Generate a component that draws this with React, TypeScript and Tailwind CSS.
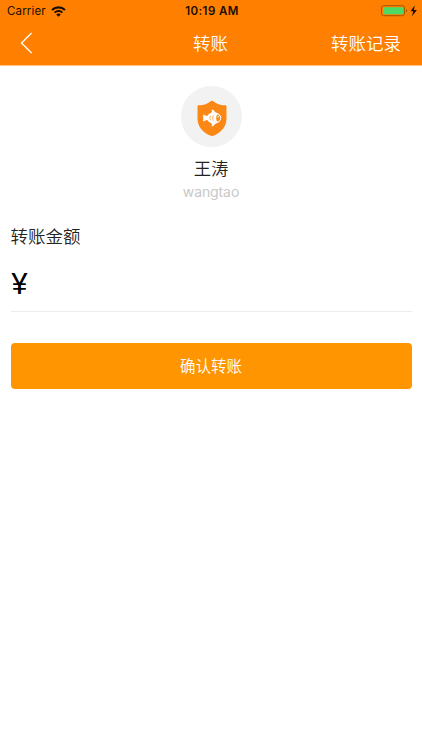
import React, { useState } from 'react'

const StatusBar: React.FC = () => (
  <div className="h-[21px] pt-px flex items-center justify-between pl-[7px] pr-[5px] font-normal text-[#1a0d00] font-['Inter',sans-serif]">
    <div className="flex-1 flex items-center gap-[5px]">
      <span className="text-[11.5px] leading-[21px] tracking-[0.15px]">Carrier</span>
      <svg width="15" height="11" viewBox="0 0 15 11" fill="none" stroke="#1a0d00">
        <path d="M1 4a9.2 9.2 0 0 1 13 0" strokeWidth="2.2" />
        <path d="M3.6 6.6a5.5 5.5 0 0 1 7.8 0" strokeWidth="1.9" />
        <path d="M7.5 10.8 5.2 8.5a3.1 3.1 0 0 1 4.6 0Z" fill="#1a0d00" stroke="none" />
      </svg>
    </div>
    <span className="text-[11.5px] leading-[21px] font-semibold tracking-[0.4px]">10:19 AM</span>
    <div className="flex-1 flex items-center justify-end">
      <svg width="36" height="12" viewBox="0 0 36 12">
        <rect x="0.5" y="0.7" width="23" height="10" rx="2" fill="none" stroke="#a85400" />
        <rect x="2" y="2.2" width="20" height="7" rx="0.8" fill="#4cd964" />
        <path d="M25 4.2c1.6.5 1.6 2.5 0 3Z" fill="#a85400" />
        <path d="M33.6.6 29.6 6.3h2.6L31 11.2l4.9-6.2H33Z" fill="#1a0d00" />
      </svg>
    </div>
  </div>
)

// Orange shield with the fish mark
const ShieldFish: React.FC = () => (
  <svg width="30" height="36" viewBox="0 0 30 36">
    <path
      d="M15 .7c1.2 0 2.6 1.5 4.4 2.5C21.8 4.6 24.6 5.2 28 5.2c1 0 1.5.5 1.5 1.5v11.6C29.5 26.4 24.8 32 17.5 35.3c-1.9.8-3.1.8-5 0C5.2 32 .5 26.4.5 18.3V6.7c0-1 .5-1.5 1.5-1.5 3.4 0 6.2-.6 8.6-2C12.4 2.2 13.8.7 15 .7Z"
      fill="#fb8715"
    />
    {/* Body, tail and fins */}
    <ellipse cx="17" cy="18" rx="7.2" ry="5.7" fill="#fff" />
    <path d="M6.200 14.500 11.500 16.800v2.400L6.200 21.500Z" fill="#fff" />
    <path d="M14.600 9.800h1.700l3 3.700h-5.500l1.200-1.700ZM14.600 26.200h1.700l3-3.700h-5.500l1.200 1.700Z" fill="#fff" />
    {/* Head, eye and stripes */}
    <path d="M20.200 14.300c2.100.7 3 2 3 3.700s-.9 3-3 3.700c-1.300-2.100-1.300-5.300 0-7.400Z" fill="#fb8715" />
    <circle cx="21.300" cy="16.800" r="0.8" fill="#fff" />
    <g fill="none" stroke="#fb8715" strokeWidth="0.7">
      <path d="M13.500 15.800c-.7 1.500-.7 3 0 4.400" />
      <path d="M16.300 15.200c-.9 1.900-.9 3.800 0 5.600" />
    </g>
  </svg>
)

const TransferPage: React.FC = () => {
  const [amount, setAmount] = useState('')

  return (
    <div className="min-h-screen bg-white font-['Noto_Sans_CJK_SC',sans-serif] font-[350]">
      {/* Header */}
      <header className="h-[66px] bg-[#ff8000] border-b border-[#ffbf80]">
        <StatusBar />
        <nav className="h-[44px] flex items-center justify-between pl-5 pr-[21px] text-white text-[17.5px] leading-[26px]">
          <button type="button" aria-label="返回" className="w-[70px]">
            <svg width="13" height="22" viewBox="0 0 13 22" fill="none" stroke="#fff" strokeWidth="1.3">
              <path d="M11.6 1 1.5 11l10.1 10" />
            </svg>
          </button>
          <h1 className="font-[350]">转账</h1>
          <button type="button" className="w-[70px] whitespace-nowrap">转账记录</button>
        </nav>
      </header>

      {/* Recipient */}
      <section className="pt-5 flex flex-col items-center">
        <div className="size-[61px] rounded-full bg-[#f2f2f2] flex items-center justify-center pt-[3px] pl-px">
          <ShieldFish />
        </div>
        <p className="mt-2 text-[17.3px] leading-[26px] text-[#222]">王涛</p>
        <p className="mt-px text-[14px] leading-[20px] tracking-[-0.1px] font-normal text-[#c8c8c8] font-['Inter',sans-serif]">wangtao</p>
      </section>

      {/* Amount */}
      <section className="px-[10.5px] pt-[21px]">
        <label htmlFor="amount" className="block text-[17.5px] leading-[26px] text-[#222]">
          转账金额
        </label>
        <div className="mt-[9px] h-[54px] pb-0.5 flex items-center border-b border-[#ececec]">
          <span className="text-[28px] leading-none font-normal text-black font-['Inter',sans-serif] origin-left scale-x-110">¥</span>
          <input
            id="amount"
            inputMode="decimal"
            value={amount}
            onChange={(e) => setAmount(e.target.value)}
            className="flex-1 min-w-0 ml-2 text-[28px] leading-none outline-none"
          />
        </div>
        <button type="button" className="mt-[31px] w-full h-[45.5px] rounded bg-[#ff9500] text-white text-[15.5px]">
          确认转账
        </button>
      </section>
    </div>
  )
}

export default TransferPage
